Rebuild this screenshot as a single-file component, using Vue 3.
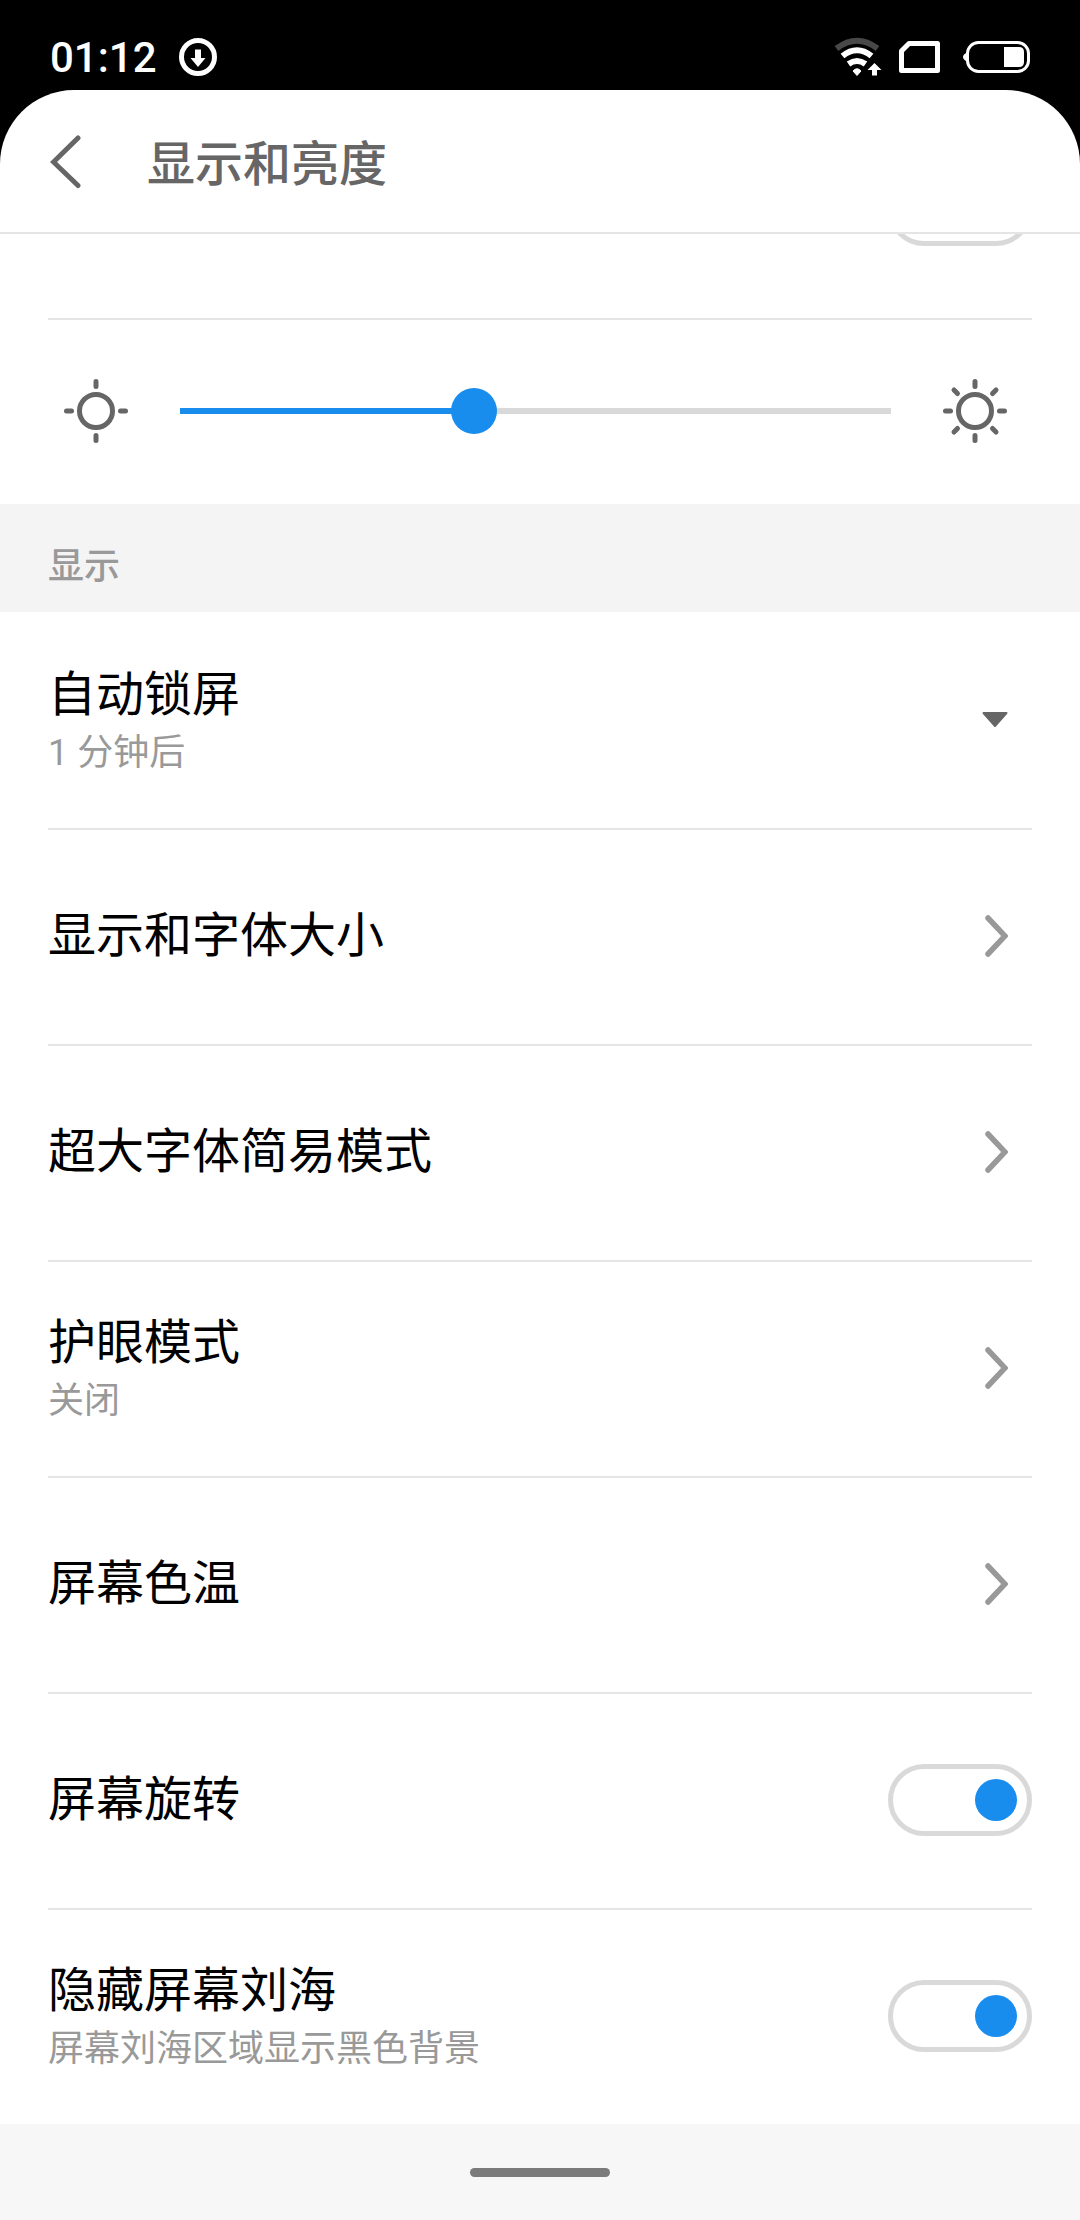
<script setup>
const brightness = 41.35

const rows = [
  { title: '自动锁屏', note: '1 分钟后', control: 'menu' },
  { title: '显示和字体大小', control: 'link' },
  { title: '超大字体简易模式', control: 'link' },
  { title: '护眼模式', note: '关闭', control: 'link' },
  { title: '屏幕色温', control: 'link' },
  { title: '屏幕旋转', control: 'switch' },
  { title: '隐藏屏幕刘海', note: '屏幕刘海区域显示黑色背景', control: 'switch' },
]
</script>

<template>
  <div class="screen">
    <header class="status">
      <span class="clock">01:12</span>
      <svg class="download" viewBox="0 0 38 38" width="38" height="38">
        <circle cx="19" cy="19" r="16.500" fill="none" stroke="#fff" stroke-width="5" />
        <path d="M16 11.500h6V20h4.500L19 29l-7.500-9H16z" fill="#fff" />
      </svg>
      <svg class="signals" viewBox="830 34 202 46" width="202" height="46">
        <g fill="none" stroke="#fff" stroke-width="6">
          <path d="M836.500 48.500Q857 33 877.500 48.500" stroke="#484848" />
          <path d="M842.500 56Q857 44.500 871.500 56" />
          <path d="M848.500 64Q857 58 865.500 64" />
        </g>
        <path d="M853 71Q857 66.500 861 71L857 75.500z" fill="#fff" stroke="#fff" />
        <path d="M874.500 63l7 7h-4.500v5.500h-5V70h-4.500z" fill="#fff" />
        <path d="M909 43.500h28.500v27h-36V51z" fill="none" stroke="#fff" stroke-width="5" stroke-linejoin="round" />
        <rect x="967.500" y="42.500" width="61" height="29" rx="11" fill="none" stroke="#fff" stroke-width="3" />
        <path d="M968 50.500q-1.500 2.500-4 4-2 2.500 0 5 2.500 1.500 4 4z" fill="#fff" />
        <path d="M1004 47h15q5 0 5 5v10q0 5-5 5h-15z" fill="#fff" />
      </svg>
    </header>

    <div class="sheet">
      <div class="titlebar">
        <svg class="back" viewBox="0 0 32 54" width="32" height="54">
          <path d="M28 3L3.500 27 28 50.500" fill="none" stroke="#666" stroke-width="5" stroke-linecap="round" />
        </svg>
        <h1>显示和亮度</h1>
      </div>

      <main>
        <div class="row clipped"><span class="switch"></span></div>
        <div class="brightness">
          <svg viewBox="-32 -32 64 64" width="64" height="64">
            <g fill="none" stroke="#666" stroke-width="5" stroke-linecap="round">
              <circle r="16.500" />
              <path d="M0-29.500v5M0 24.500v5M-29.500 0h5M24.500 0h5" />
            </g>
          </svg>
          <div class="track">
            <div class="fill" :style="{ width: brightness + '%' }"><i class="thumb"></i></div>
          </div>
          <svg viewBox="-32 -32 64 64" width="64" height="64">
            <g fill="none" stroke="#666" stroke-width="5" stroke-linecap="round">
              <circle r="16.500" />
              <path d="M0-29.500v5M0 24.500v5M-29.500 0h5M24.500 0h5M-21-21l3.500 3.500M21-21l-3.500 3.500M-21 21l3.500-3.500M21 21l-3.500-3.500" />
            </g>
          </svg>
        </div>

        <h2>显示</h2>

        <div v-for="row in rows" :key="row.title" class="row" :class="{ noted: row.note }">
          <div class="label">
            <div class="name">{{ row.title }}</div>
            <div v-if="row.note" class="note">{{ row.note }}</div>
          </div>
          <svg v-if="row.control === 'menu'" class="mark" viewBox="0 0 26 16" width="26" height="16">
            <path d="M1.500 1h23L13 14z" fill="#666" stroke="#666" stroke-width="2" stroke-linejoin="round" />
          </svg>
          <svg v-else-if="row.control === 'link'" class="mark" viewBox="0 0 24 44" width="24" height="44">
            <path d="M4 4l17 18L4 40" fill="none" stroke="#999" stroke-width="5.500" stroke-linecap="round" />
          </svg>
          <span v-else class="switch"></span>
        </div>
      </main>
    </div>

    <footer><i></i></footer>
  </div>
</template>

<style>
body {
  margin: 0;
  background: #000;
}
</style>

<style scoped>
.screen {
  width: 1080px;
  height: 2220px;
  display: flex;
  flex-direction: column;
  background: #000;
  font-family: Roboto, "Noto Sans CJK SC", sans-serif;
}
.status {
  height: 90px;
  flex: none;
  box-sizing: border-box;
  padding: 24px 48px 0 50px;
  display: flex;
  align-items: center;
  color: #fff;
}
.clock {
  padding-top: 2px;
  font-size: 42px;
  line-height: 48px;
  font-weight: 500;
}
.download {
  margin-left: 22px;
}
.signals {
  margin-left: auto;
}
.sheet {
  height: 2034px;
  flex: none;
  display: flex;
  flex-direction: column;
  background: #fff;
  border-radius: 74px 74px 0 0;
  overflow: hidden;
}
.titlebar {
  height: 144px;
  flex: none;
  box-sizing: border-box;
  padding: 2px 0 0 50px;
  display: flex;
  align-items: center;
  border-bottom: 2px solid #e5e5e5;
}
h1 {
  margin: 6px 0 0 65px;
  font-size: 48px;
  line-height: 64px;
  font-weight: 500;
  color: #666;
}
main {
  flex: 1;
  min-height: 0;
  overflow: hidden;
}
.row {
  height: 216px;
  margin: 0 48px;
  display: flex;
  align-items: center;
  justify-content: space-between;
  box-shadow: inset 0 2px #e5e5e5;
}
h2 + .row {
  box-shadow: none;
}
.row.clipped {
  margin-top: -132px;
  justify-content: flex-end;
}
.noted .label {
  padding-bottom: 4px;
}
.name {
  font-size: 48px;
  line-height: 70px;
  color: #000;
}
.note {
  font-size: 36px;
  line-height: 46px;
  color: #999;
}
.mark {
  margin-right: 24px;
}
.switch {
  width: 144px;
  height: 72px;
  box-sizing: border-box;
  padding-right: 10px;
  border: 5px solid #d9d9d9;
  border-radius: 36px;
  display: flex;
  align-items: center;
  justify-content: flex-end;
}
.switch::after {
  content: "";
  width: 42px;
  height: 42px;
  border-radius: 50%;
  background: #198ded;
}
.brightness {
  height: 186px;
  box-sizing: border-box;
  margin: 0 48px;
  padding: 0 25px 0 16px;
  display: flex;
  align-items: center;
  justify-content: space-between;
  box-shadow: inset 0 2px #e5e5e5;
}
.track {
  width: 711px;
  height: 6px;
  background: #d9d9d9;
}
.fill {
  height: 6px;
  display: flex;
  align-items: center;
  justify-content: flex-end;
  background: #198ded;
}
.thumb {
  flex: none;
  width: 46px;
  height: 46px;
  margin-right: -23px;
  border-radius: 50%;
  background: #198ded;
}
h2 {
  height: 108px;
  margin: 0;
  padding: 18px 48px 0;
  box-sizing: border-box;
  background: #f4f4f4;
  color: #999;
  font-size: 36px;
  line-height: 90px;
  font-weight: 500;
}
footer {
  flex: 1;
  display: flex;
  align-items: center;
  justify-content: center;
  background: #f7f7f7;
}
footer i {
  width: 140px;
  height: 9px;
  border-radius: 5px;
  background: #7b7b7b;
}
</style>
